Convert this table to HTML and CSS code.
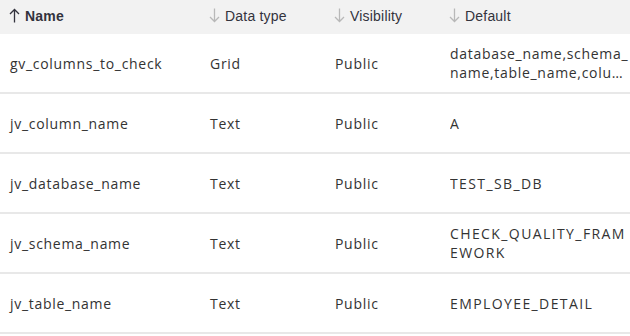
FILE: index.html
```html
<!DOCTYPE html>
<html lang="en">
<head>
  <meta charset="UTF-8" />
  <title>Variables</title>
  <link rel="stylesheet" href="styles.css">
</head>
<body>
  <table class="var-table">
    <colgroup>
      <col class="col-name">
      <col class="col-type">
      <col class="col-vis">
      <col class="col-def">
    </colgroup>
    <thead>
      <tr>
        <th>
          <span class="head">
            <svg class="arrow up" width="11" height="15" viewBox="0 0 11 15"><path d="M5.5 14.5V1.5M1 6l4.5-4.5L10 6" fill="none" stroke="currentColor" stroke-width="1.3"/></svg>
            <strong>Name</strong>
          </span>
        </th>
        <th>
          <span class="head">
            <svg class="arrow" width="11" height="15" viewBox="0 0 11 15"><path d="M5.5 0.5v13M1 9l4.5 4.5L10 9" fill="none" stroke="currentColor" stroke-width="1.3"/></svg>
            Data type
          </span>
        </th>
        <th>
          <span class="head">
            <svg class="arrow" width="11" height="15" viewBox="0 0 11 15"><path d="M5.5 0.5v13M1 9l4.5 4.5L10 9" fill="none" stroke="currentColor" stroke-width="1.3"/></svg>
            Visibility
          </span>
        </th>
        <th>
          <span class="head">
            <svg class="arrow" width="11" height="15" viewBox="0 0 11 15"><path d="M5.5 0.5v13M1 9l4.5 4.5L10 9" fill="none" stroke="currentColor" stroke-width="1.3"/></svg>
            Default
          </span>
        </th>
      </tr>
    </thead>
    <tbody>
      <tr>
        <td>gv_columns_to_check</td>
        <td>Grid</td>
        <td>Public</td>
        <td class="def"><div class="clamp">database_name,schema_name,table_name,column_name</div></td>
      </tr>
      <tr>
        <td>jv_column_name</td>
        <td>Text</td>
        <td>Public</td>
        <td class="def"><div class="clamp caps">A</div></td>
      </tr>
      <tr>
        <td>jv_database_name</td>
        <td>Text</td>
        <td>Public</td>
        <td class="def"><div class="clamp caps">TEST_SB_DB</div></td>
      </tr>
      <tr>
        <td>jv_schema_name</td>
        <td>Text</td>
        <td>Public</td>
        <td class="def"><div class="clamp caps">CHECK_QUALITY_FRAMEWORK</div></td>
      </tr>
      <tr>
        <td>jv_table_name</td>
        <td>Text</td>
        <td>Public</td>
        <td class="def"><div class="clamp caps">EMPLOYEE_DETAIL</div></td>
      </tr>
    </tbody>
  </table>
</body>
</html>
```

FILE: styles.css
```css
body {
  margin: 0;
  background: #ffffff;
}
.var-table {
  width: 630px;
  table-layout: fixed;
  border-collapse: collapse;
  font-family: 'Open Sans', sans-serif;
  font-size: 14px;
  letter-spacing: 0.7px;
  color: #333;
}
.col-name { width: 200px; }
.col-type { width: 125px; }
.col-vis { width: 115px; }
.col-def { width: 190px; }
thead tr {
  background: #f2f2f2;
}
th {
  height: 34px;
  box-sizing: border-box;
  padding: 0 0 3px 9px;
  text-align: left;
  font-family: 'Liberation Sans', Arial, sans-serif;
  font-weight: normal;
  font-size: 14px;
  letter-spacing: 0.2px;
  color: #33333d;
}
.head {
  display: flex;
  align-items: center;
  gap: 5px;
}
th strong {
  font-weight: bold;
}
.arrow {
  color: #b8b8b8;
  flex: none;
}
.arrow.up {
  color: #33333d;
}
td {
  height: 58px;
  padding: 0 0 0 10px;
  border-bottom: 2px solid #e8e8e8;
  vertical-align: middle;
}
td.def {
  padding-right: 0;
}
.clamp {
  line-height: 19px;
  word-break: break-all;
  display: -webkit-box;
  -webkit-line-clamp: 2;
  -webkit-box-orient: vertical;
  overflow: hidden;
}
.clamp.caps {
  letter-spacing: 1.4px;
}
```
